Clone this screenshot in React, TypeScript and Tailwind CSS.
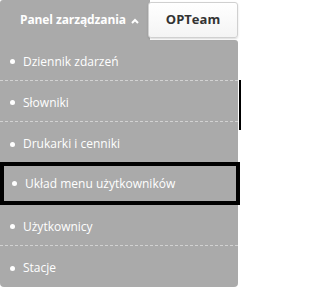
const items = [
  "Dziennik zdarzeń",
  "Słowniki",
  "Drukarki i cenniki",
  "Układ menu użytkowników",
  "Użytkownicy",
  "Stacje",
];

const activeIndex = 3;

export default function App() {
  return (
    <div className="relative w-[241px] h-[289px] bg-white overflow-hidden font-['Open_Sans',sans-serif]">
      {/* Top bar */}
      <div className="flex items-start">
        <div className="h-[40px] w-[150px] bg-[#aaaaaa] rounded-tl-[3px] flex items-center pl-[20px] gap-[5px]">
          <span className="text-white font-bold text-[12px] tracking-[-0.1px]">Panel zarządzania</span>
          <svg width="8" height="6" viewBox="0 0 8 6" className="mt-[1px]">
            <path d="M1 5 L4 2 L7 5" stroke="white" strokeWidth="2" fill="none" />
          </svg>
        </div>
        <div className="-ml-[2px] mt-[2px] h-[36px] w-[90px] rounded-[3px] border border-[#d0d0d0] bg-gradient-to-b from-white to-[#f4f4f4] shadow-[0_1px_2px_rgba(0,0,0,0.15)] flex items-center justify-center">
          <span className="text-[#333] font-bold text-[13px]">OPTeam</span>
        </div>
      </div>

      {/* Dropdown */}
      <div className="w-[238px] bg-[#aaaaaa] rounded-b-[4px] rounded-tr-[3px]">
        {items.map((label, i) => {
          const active = i === activeIndex;
          const sepBelow = i < items.length - 1 && i !== activeIndex - 1 && i !== activeIndex;
          return (
            <div
              key={label}
              className={
                active
                  ? "h-[43px] w-[240px] border-[4px] border-black flex items-center pl-[8px] gap-[8px] -mt-[1px]"
                  : `h-[41px] flex items-center pl-[10px] pt-[3px] gap-[8px] ${sepBelow ? "border-b border-dashed border-[#d2d2d2]" : ""}`
              }
            >
              <span className="w-[5px] h-[5px] rounded-full bg-white" />
              <span className="text-white text-[12px]">{label}</span>
            </div>
          );
        })}
      </div>

      {/* page edge behind the menu */}
      <div className="absolute right-0 top-[80px] w-[2px] h-[50px] bg-black" />
    </div>
  );
}
